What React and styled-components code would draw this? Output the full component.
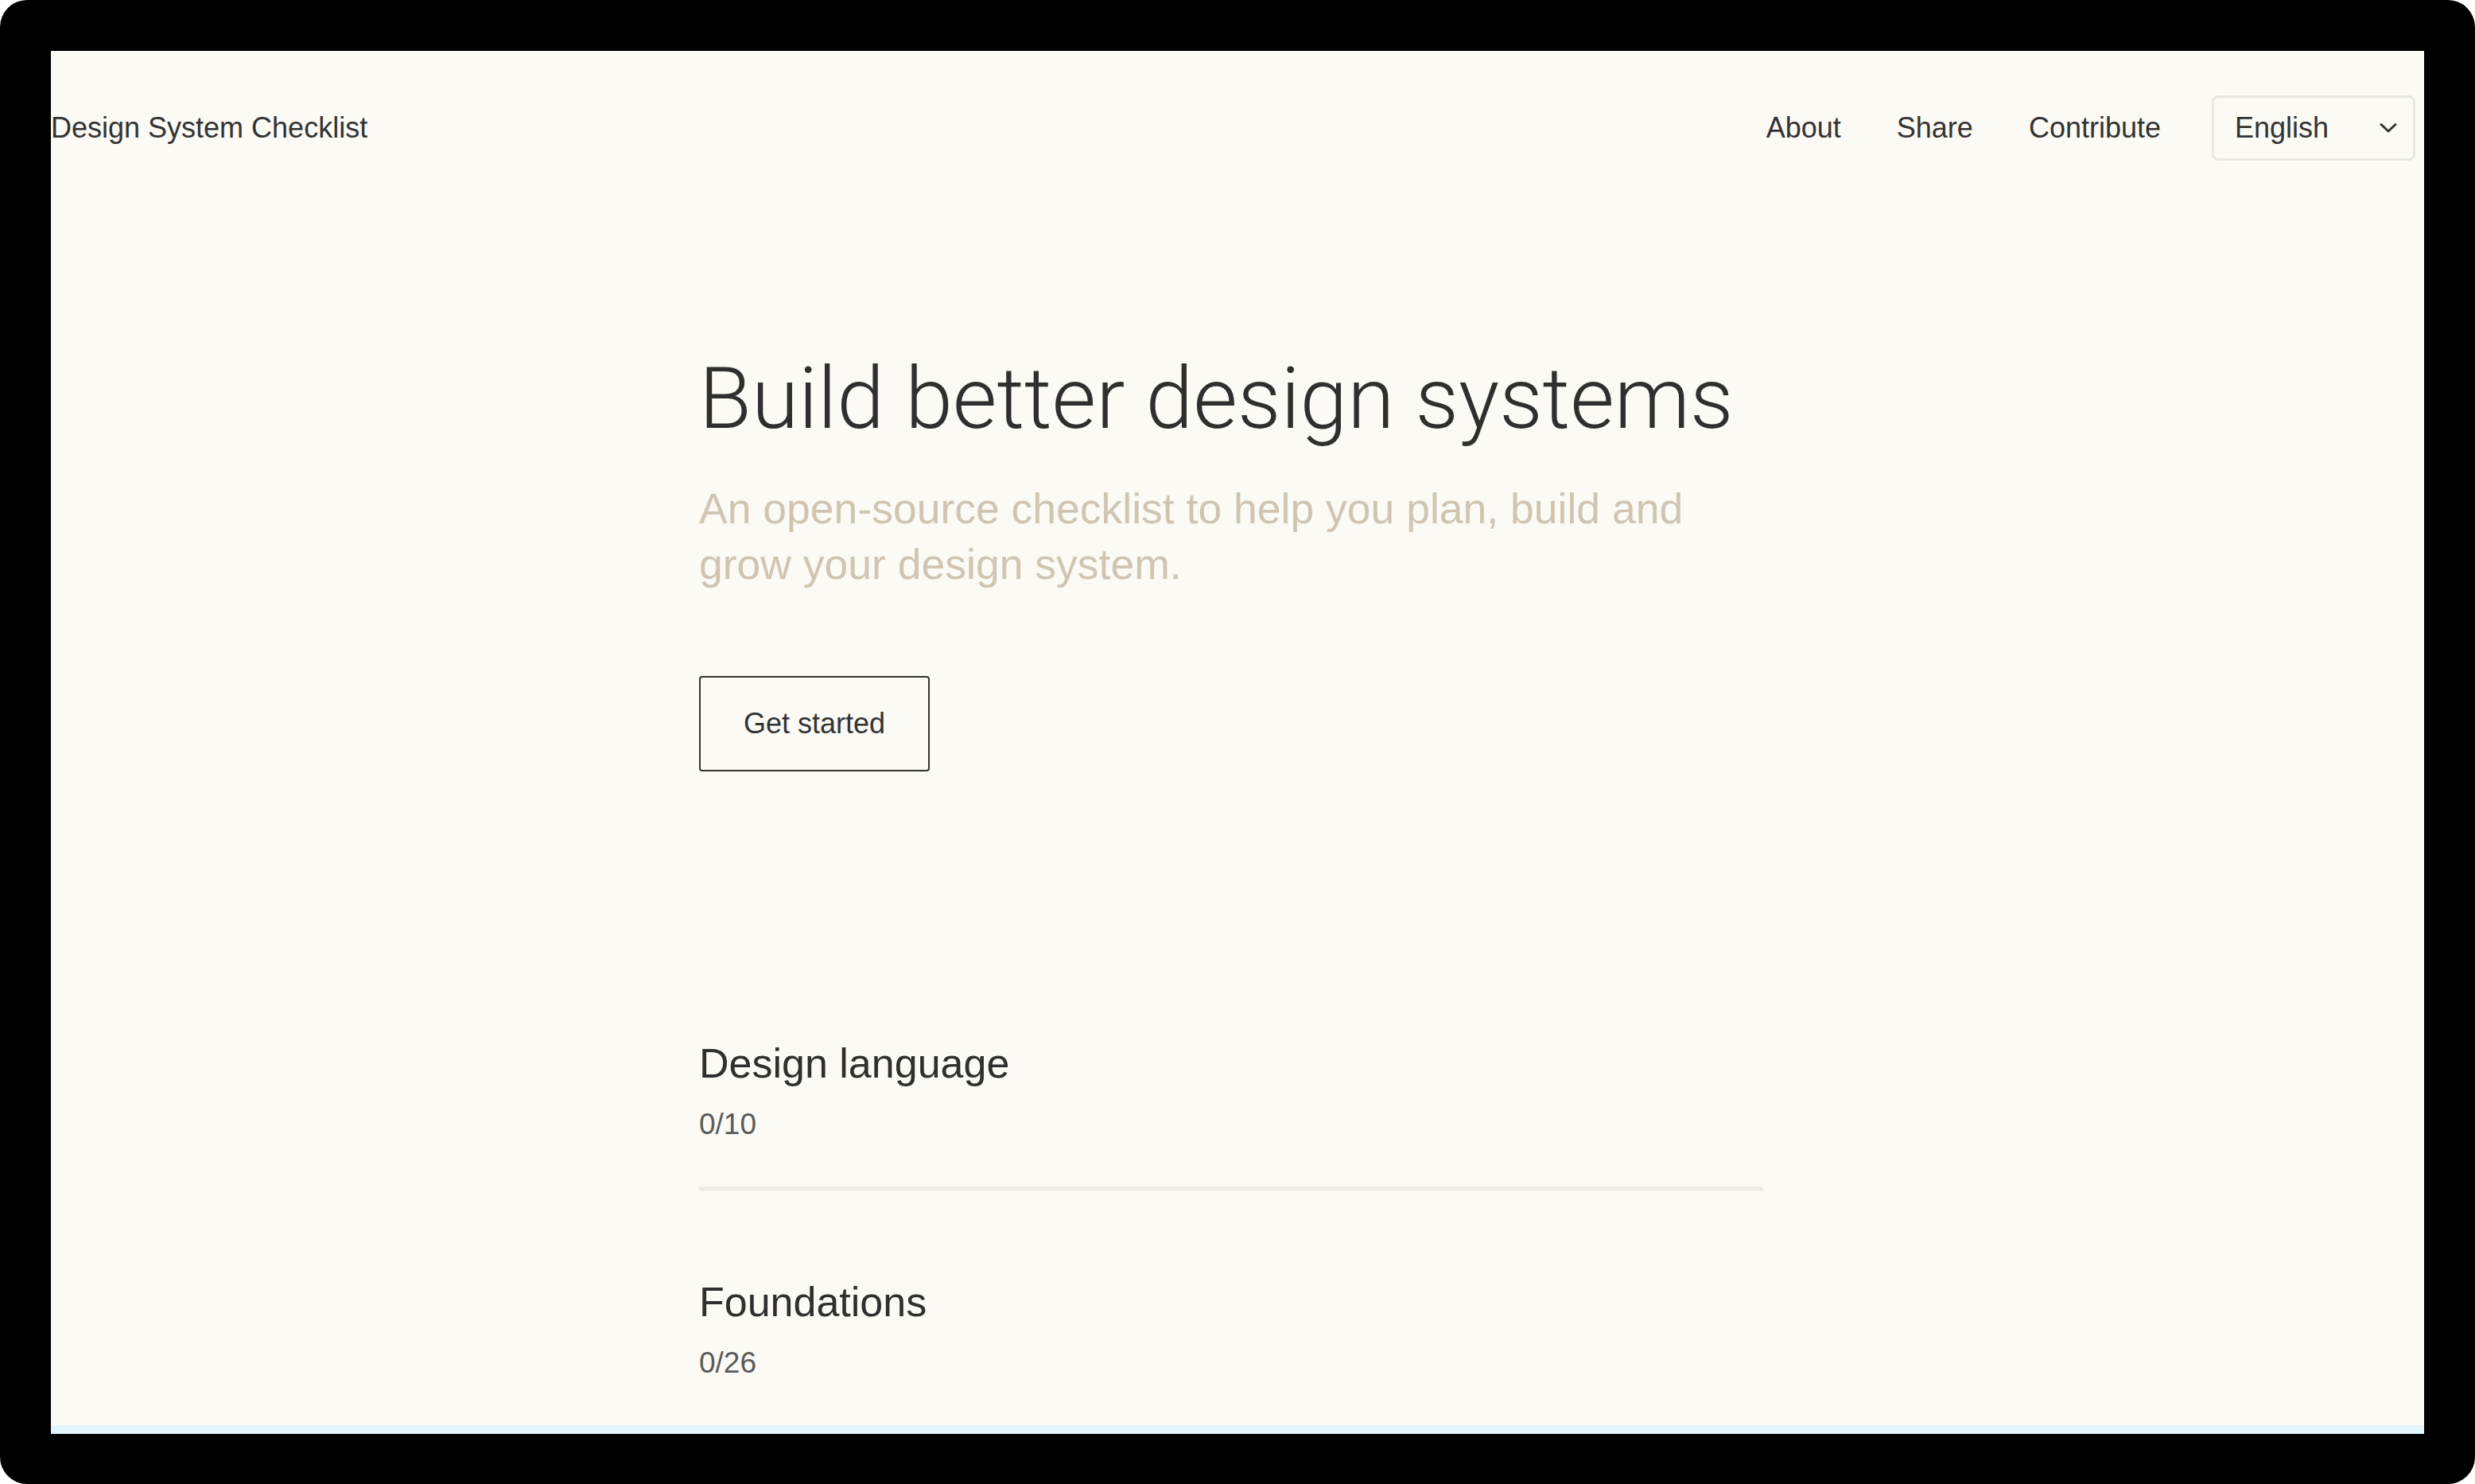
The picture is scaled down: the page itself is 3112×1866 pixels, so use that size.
import React from "react";
import styled, { createGlobalStyle } from "styled-components";

const Global = createGlobalStyle`
  html, body { margin: 0; padding: 0; background: #ffffff; }
  body { font-family: "Liberation Sans", Arial, sans-serif; }
  * { box-sizing: border-box; }
`;

const Frame = styled.div`
  width: 3112px;
  height: 1866px;
  background: #000;
  border-radius: 34px;
  padding: 64px 64px 63px 64px;
  display: flex;
`;

const Screen = styled.div`
  flex: 1;
  display: flex;
  flex-direction: column;
  background: #fbfaf4;
  overflow: hidden;
`;

const Page = styled.div`
  flex: 1;
  overflow: hidden;
  color: #2f2f2f;
`;

const Strip = styled.div`
  height: 11px;
  background: #e4f6fd;
`;

const Header = styled.header`
  height: 194px;
  display: flex;
  align-items: center;
  justify-content: space-between;
  padding-right: 11px;
`;

const Brand = styled.a`
  font-size: 36px;
  color: #333;
  text-decoration: none;
`;

const Nav = styled.nav`
  display: flex;
  align-items: center;
  gap: 70px;
`;

const NavLink = styled.a`
  font-size: 36px;
  color: #333;
  text-decoration: none;
`;

const Select = styled.div`
  width: 256px;
  height: 82px;
  margin-left: -6px;
  border: 3px solid #e9e7e0;
  border-radius: 8px;
  display: flex;
  align-items: center;
  justify-content: space-between;
  padding: 0 20px 0 26px;
  font-size: 36px;
  color: #333;
`;

const Main = styled.main`
  padding-left: 815px;
`;

const Column = styled.div`
  width: 1338px;
`;

const Hero = styled.section`
  padding-top: 181px;
`;

const Title = styled.h1`
  margin: 0;
  font-family: Roboto, "Liberation Sans", sans-serif;
  font-size: 107.5px;
  line-height: 125px;
  font-weight: 300;
  color: #2f2f2f;
`;

const Lead = styled.p`
  margin: 41px 0 0;
  font-size: 53.5px;
  line-height: 70px;
  color: #d0c4b3;
`;

const Button = styled.button`
  margin-top: 105px;
  width: 290px;
  height: 120px;
  border: 2px solid #333;
  border-radius: 4px;
  background: transparent;
  font-family: inherit;
  font-size: 36px;
  color: #333;
  cursor: pointer;
`;

const Sections = styled.div`
  margin-top: 227px;
`;

const Section = styled.section`
  padding: 109px 0 58px;
  border-bottom: 5px solid #ecebe7;
`;

const SectionTitle = styled.h2`
  margin: 0;
  font-size: 52px;
  line-height: 62px;
  font-weight: 400;
  color: #2f2f2f;
`;

const Count = styled.div`
  margin-top: 26px;
  font-size: 37px;
  line-height: 40px;
  color: #5a5a5a;
`;

const Chevron = () => (
  <svg width="22" height="14" viewBox="0 0 22 14" fill="none">
    <path d="M2 2.5 L11 11 L20 2.5" stroke="#333" strokeWidth="3" strokeLinecap="round" strokeLinejoin="round" />
  </svg>
);

const sections = [
  { title: "Design language", done: 0, total: 10 },
  { title: "Foundations", done: 0, total: 26 },
];

export default function App() {
  return (
    <>
      <Global />
      <Frame>
        <Screen>
          <Page>
            <Header>
              <Brand href="#">Design System Checklist</Brand>
              <Nav>
                <NavLink href="#">About</NavLink>
                <NavLink href="#">Share</NavLink>
                <NavLink href="#">Contribute</NavLink>
                <Select>
                  <span>English</span>
                  <Chevron />
                </Select>
              </Nav>
            </Header>
            <Main>
              <Column>
                <Hero>
                  <Title>Build better design systems</Title>
                  <Lead>
                    An open-source checklist to help you plan, build and grow your design system.
                  </Lead>
                  <Button>Get started</Button>
                </Hero>
                <Sections>
                  {sections.map((s) => (
                    <Section key={s.title}>
                      <SectionTitle>{s.title}</SectionTitle>
                      <Count>
                        {s.done}/{s.total}
                      </Count>
                    </Section>
                  ))}
                </Sections>
              </Column>
            </Main>
          </Page>
          <Strip />
        </Screen>
      </Frame>
    </>
  );
}
